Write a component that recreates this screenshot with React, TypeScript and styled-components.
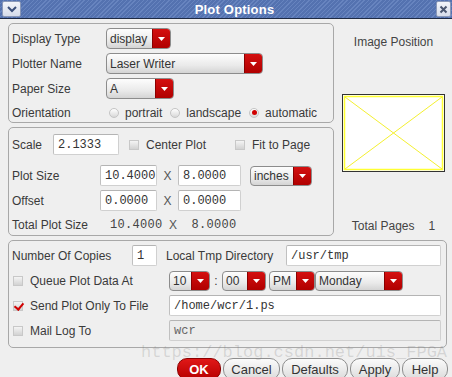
import React from 'react'
import styled, { createGlobalStyle, css } from 'styled-components'

const GlobalStyle = createGlobalStyle`
  html, body {
    margin: 0;
    padding: 0;
    background: #efefef;
  }
  body {
    font-family: "Liberation Sans", Arial, sans-serif;
    font-size: 12px;
    color: #3a3a3a;
  }
`

const App = () => {
  return (
    <Window>
      <GlobalStyle />
      <TitleBar>
        <TitleButton>
          <svg width="12" height="8" viewBox="0 0 12 8">
            <path d="M2 2 L6 6 L10 2" stroke="#3b4f7a" strokeWidth="2" fill="none" />
          </svg>
        </TitleButton>
        <Title>Plot Options</Title>
        <CloseButton>
          <svg width="9" height="9" viewBox="0 0 9 9">
            <path d="M1.5 1.5 L7.5 7.5 M7.5 1.5 L1.5 7.5" stroke="#4a5670" strokeWidth="2" />
          </svg>
        </CloseButton>
      </TitleBar>

      <Content>
        <TopArea>
          <LeftCol>
            <Panel $height={100} $pad="4px 0 0 3px" $gap={4}>
              <Row>
                <Label $width={94}>Display Type</Label>
                <Dropdown value="display" width={65} />
              </Row>
              <Row>
                <Label $width={94}>Plotter Name</Label>
                <Dropdown value="Laser Writer" width={157} />
              </Row>
              <Row>
                <Label $width={94}>Paper Size</Label>
                <Dropdown value="A" width={68} />
              </Row>
              <Row $height={19}>
                <Label $width={97}>Orientation</Label>
                <RadioItem><Radio /><span>portrait</span></RadioItem>
                <RadioItem><Radio /><span>landscape</span></RadioItem>
                <RadioItem><Radio $checked /><span>automatic</span></RadioItem>
              </Row>
            </Panel>

            <Panel $height={109} $pad="6px 0 0 3px" $gap={4}>
              <Row>
                <Label $width={41}>Scale</Label>
                <Input $width={66}>2.1333</Input>
                <CheckItem $ml={10}><Checkbox /><span>Center Plot</span></CheckItem>
                <CheckItem $ml={29}><Checkbox /><span>Fit to Page</span></CheckItem>
              </Row>
              <Row $mt={6}>
                <Label $width={88}>Plot Size</Label>
                <Input $width={57}>10.4000</Input>
                <Times>X</Times>
                <Input $width={63}>8.0000</Input>
                <Spacer $w={9} />
                <Dropdown value="inches" width={62} height={20} />
              </Row>
              <Row>
                <Label $width={88}>Offset</Label>
                <Input $width={57}>0.0000</Input>
                <Times>X</Times>
                <Input $width={63}>0.0000</Input>
              </Row>
              <Row $height={20}>
                <Label $width={98}>Total Plot Size</Label>
                <Mono>10.4000</Mono>
                <Times>X</Times>
                <Spacer $w={8} />
                <Mono>8.0000</Mono>
              </Row>
            </Panel>
          </LeftCol>

          <RightCol>
            <SideLabel>Image Position</SideLabel>
            <PreviewBox>
              <svg width="101" height="76" viewBox="0 0 101 76">
                <rect x="1.5" y="1.5" width="98" height="73" fill="#fff" stroke="#ffff33" strokeWidth="1.5" />
                <path d="M2 2 L99 74 M99 2 L2 74" stroke="#f4f030" strokeWidth="1" />
              </svg>
            </PreviewBox>
            <TotalPages>
              <span>Total Pages</span>
              <span>1</span>
            </TotalPages>
          </RightCol>
        </TopArea>

        <Panel $height={108} $pad="4px 0 0 3px" $gap={4}>
          <Row>
            <Label $width={120}>Number Of Copies</Label>
            <Input $width={25}>1</Input>
            <Label $width={120} $ml={9}>Local Tmp Directory</Label>
            <Input $width={155}>/usr/tmp</Input>
          </Row>
          <Row>
            <CheckItem $width={157} $ml={1}><Checkbox /><span>Queue Plot Data At</span></CheckItem>
            <Dropdown value="10" width={41} height={20} />
            <Colon>:</Colon>
            <Dropdown value="00" width={44} height={20} />
            <Spacer $w={3} />
            <Dropdown value="PM" width={46} height={20} />
            <Dropdown value="Monday" width={88} height={20} />
          </Row>
          <Row>
            <CheckItem $width={157} $ml={1}><Checkbox $checked /><span>Send Plot Only To File</span></CheckItem>
            <Input $width={272}>/home/wcr/1.ps</Input>
          </Row>
          <Row>
            <CheckItem $width={157} $ml={1}><Checkbox /><span>Mail Log To</span></CheckItem>
            <Input $width={272} $disabled>wcr</Input>
          </Row>
        </Panel>

        <ButtonRow>
          <Button $primary $width={44}>OK</Button>
          <Button $width={57}>Cancel</Button>
          <Button $width={66}>Defaults</Button>
          <Button $width={50}>Apply</Button>
          <Button $width={46}>Help</Button>
        </ButtonRow>
      </Content>

      <Watermark>https://blog.csdn.net/uis_FPGA</Watermark>
    </Window>
  )
}

const Dropdown = ({ value, width, height = 21 }: { value: string; width: number; height?: number }) => (
  <DropBox style={{ width, height }}>
    <DropText>{value}</DropText>
    <DropArrow>
      <svg width="7" height="4" viewBox="0 0 7 4">
        <path d="M0 0 L7 0 L3.5 4 Z" fill="#fff" />
      </svg>
    </DropArrow>
  </DropBox>
)

export default App

const Window = styled.div`
  position: relative;
  width: 452px;
  height: 377px;
  overflow: hidden;
  background: #efefef;
`

const TitleBar = styled.div`
  height: 18px;
  display: flex;
  align-items: center;
  padding: 0 1px 0 2px;
  border-bottom: 1px solid #1e2a44;
  background: repeating-linear-gradient(
    -45deg,
    #5472b0 0px,
    #5472b0 2px,
    #6784bf 2px,
    #6784bf 3px
  );
`

const TitleButton = styled.div`
  width: 17px;
  height: 14px;
  border: 1px solid #8a98b8;
  border-radius: 2px;
  background: linear-gradient(#f2f4fa, #d6dcea);
  display: flex;
  align-items: center;
  justify-content: center;
`

const CloseButton = styled(TitleButton)`
  width: 13px;
`

const Title = styled.div`
  flex: 1;
  text-align: center;
  color: #fff;
  font-weight: bold;
  font-size: 13px;
  letter-spacing: 0.2px;
  padding-left: 12px;
`

const Content = styled.div`
  padding: 4px 5px 0 8px;
  display: flex;
  flex-direction: column;
  gap: 4px;
`

const TopArea = styled.div`
  display: flex;
`

const LeftCol = styled.div`
  width: 326px;
  display: flex;
  flex-direction: column;
  gap: 4px;
`

const RightCol = styled.div`
  flex: 1;
  display: flex;
  flex-direction: column;
  align-items: center;
  padding-left: 6px;
`

const Panel = styled.div<{ $height: number; $pad: string; $gap: number }>`
  box-sizing: border-box;
  height: ${p => p.$height}px;
  border: 1px solid #a8a8a8;
  border-radius: 5px;
  padding: ${p => p.$pad};
  display: flex;
  flex-direction: column;
  gap: ${p => p.$gap}px;
`

const Row = styled.div<{ $height?: number; $mt?: number }>`
  display: flex;
  align-items: center;
  height: ${p => p.$height ?? 21}px;
  margin-top: ${p => p.$mt ?? 0}px;
  flex-shrink: 0;
`

const Label = styled.span<{ $width: number; $ml?: number }>`
  width: ${p => p.$width}px;
  margin-left: ${p => p.$ml ?? 0}px;
  flex-shrink: 0;
  white-space: nowrap;
`

const Spacer = styled.span<{ $w: number }>`
  width: ${p => p.$w}px;
  flex-shrink: 0;
`

const Times = styled.span`
  width: 21px;
  text-align: center;
  color: #555;
  flex-shrink: 0;
`

const Colon = styled.span`
  width: 12px;
  text-align: center;
  flex-shrink: 0;
`

const Mono = styled.span`
  font-family: "Liberation Mono", "Courier New", monospace;
  font-size: 12px;
  color: #444;
  letter-spacing: 0.3px;
`

const Input = styled.div<{ $width: number; $disabled?: boolean }>`
  box-sizing: border-box;
  width: ${p => p.$width}px;
  height: 21px;
  flex-shrink: 0;
  display: flex;
  align-items: center;
  padding-left: 4px;
  font-family: "Liberation Mono", "Courier New", monospace;
  font-size: 12px;
  border: 1px solid #d0d0d0;
  border-top-color: #b4b4b4;
  border-left-color: #c0c0c0;
  border-radius: 2px;
  ${p =>
    p.$disabled
      ? css`
          background: #ececec;
          color: #666;
        `
      : css`
          background: #fff;
          color: #333;
        `}
`

const DropBox = styled.div`
  box-sizing: border-box;
  flex-shrink: 0;
  display: flex;
  border: 1px solid #8c8c8c;
  border-radius: 4px;
  overflow: hidden;
  background: linear-gradient(#fdfdfd, #eaeaea 60%, #d4d4d4);
`

const DropText = styled.span`
  flex: 1;
  display: flex;
  align-items: center;
  padding-left: 3px;
  color: #333;
  white-space: nowrap;
  overflow: hidden;
`

const DropArrow = styled.span`
  width: 17px;
  display: flex;
  align-items: center;
  justify-content: center;
  background: linear-gradient(#d41010, #b00000);
  border-left: 1px solid #8a0000;
`

const RadioItem = styled.span`
  display: flex;
  align-items: center;
  gap: 6px;
  margin-right: 8px;
`

const Radio = styled.span<{ $checked?: boolean }>`
  box-sizing: border-box;
  width: 10px;
  height: 10px;
  border-radius: 50%;
  border: 1px solid #c4c4c4;
  background: linear-gradient(#ffffff, #d8d8d8);
  display: flex;
  align-items: center;
  justify-content: center;
  &::after {
    content: '';
    display: ${p => (p.$checked ? 'block' : 'none')};
    width: 5px;
    height: 5px;
    border-radius: 50%;
    background: #d00000;
  }
`

const CheckItem = styled.span<{ $ml?: number; $width?: number }>`
  display: flex;
  align-items: center;
  gap: 7px;
  margin-left: ${p => p.$ml ?? 0}px;
  ${p => p.$width && css`width: ${p.$width - (p.$ml ?? 0)}px;`}
  flex-shrink: 0;
  white-space: nowrap;
`

const Checkbox = styled.span<{ $checked?: boolean }>`
  position: relative;
  box-sizing: border-box;
  width: 10px;
  height: 10px;
  border: 1px solid #c8c8c8;
  background: linear-gradient(#f4f4f4, #d2d2d2);
  ${p =>
    p.$checked &&
    css`
      &::after {
        content: '';
        position: absolute;
        left: 2px;
        top: -1px;
        width: 4px;
        height: 7px;
        border-right: 2px solid #d00000;
        border-bottom: 2px solid #d00000;
        transform: rotate(40deg);
      }
    `}
`

const SideLabel = styled.div`
  margin-top: 12px;
  color: #444;
`

const PreviewBox = styled.div`
  margin-top: 45px;
  width: 101px;
  height: 76px;
  border: 1px solid #333;
  background: #fff;
  display: flex;
`

const TotalPages = styled.div`
  margin-top: auto;
  margin-bottom: 3px;
  display: flex;
  gap: 14px;
  color: #444;
`

const ButtonRow = styled.div`
  display: flex;
  justify-content: flex-end;
  gap: 2px;
  margin-top: 6px;
  margin-right: -1px;
`

const Button = styled.div<{ $primary?: boolean; $width: number }>`
  box-sizing: border-box;
  width: ${p => p.$width}px;
  height: 22px;
  display: flex;
  align-items: center;
  justify-content: center;
  border-radius: 10px;
  font-size: 13px;
  ${p =>
    p.$primary
      ? css`
          background: linear-gradient(#e01818, #b80000);
          border: 1px solid #8a0000;
          color: #fff;
          font-weight: bold;
        `
      : css`
          background: linear-gradient(#fbfbfb, #dcdcdc);
          border: 1px solid #8e8e8e;
          color: #333;
        `}
`

const Watermark = styled.div`
  position: absolute;
  left: 141px;
  top: 343px;
  font-family: "Liberation Mono", "Courier New", monospace;
  font-size: 17px;
  color: rgba(120, 120, 120, 0.22);
  pointer-events: none;
  white-space: nowrap;
`
